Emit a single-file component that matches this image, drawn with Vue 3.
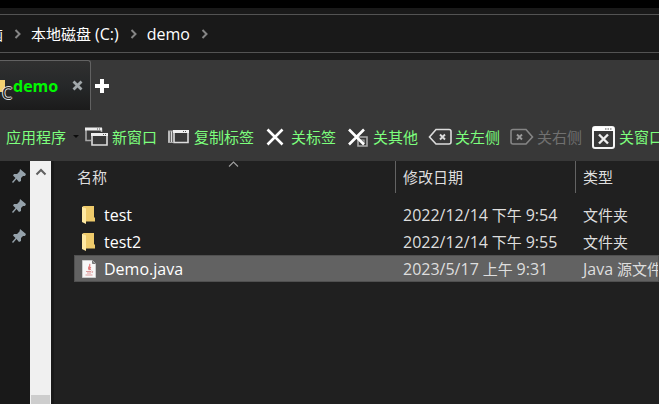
<template>
  <div class="explorer">
    <div class="titlebar"></div>
    <nav class="address">
      <div class="crumbs">
        <template v-for="crumb in crumbs" :key="crumb.text">
          <a href="#" class="crumb" @click.prevent>
            {{ crumb.text }} <span v-if="crumb.drive" class="latin">{{ crumb.drive }}</span>
          </a>
          <svg class="chevron" width="8" height="10" viewBox="0 0 8 10">
            <path d="M1.5 1l4 4-4 4" fill="none" stroke="#858585" stroke-width="2" />
          </svg>
        </template>
      </div>
    </nav>

    <div class="tabs">
      <div class="tab">
        <span class="tab-icon">
          <svg width="5" height="12" viewBox="0 0 5 12"><path d="M0 0h5v12H0z" fill="#f3d171" /></svg>
          <span class="drive">C</span>
        </span>
        <span class="tab-name">demo</span>
        <button class="tab-close" aria-label="关闭">
          <svg width="11" height="9" viewBox="0 0 11 9">
            <path d="M1.5 0.5l8 8M9.5 0.5l-8 8" stroke="#a2a8ab" stroke-width="2.8" />
          </svg>
        </button>
      </div>
      <button class="tab-add" aria-label="新标签">
        <svg width="14" height="14" viewBox="0 0 14 14">
          <path d="M7 0v14M0 7h14" stroke="#fff" stroke-width="4" />
        </svg>
      </button>
    </div>

    <div class="toolbar">
      <button class="apps">
        应用程序
        <svg width="6" height="3" viewBox="0 0 6 3"><path d="M0 0h6L3 3z" fill="#0c0c0c" /></svg>
      </button>
      <button v-for="tool in tools" :key="tool.text" class="tool" :disabled="tool.disabled">
        <svg width="24" height="24" viewBox="0 0 24 24" fill="none" stroke="#dcdcdc" stroke-width="1.6">
          <template v-if="tool.icon === 'window'">
            <path d="M5 15.500H0V4h15.500v3" stroke="#a9a9a9" />
            <path d="M-1 4h17" stroke="#eee" stroke-width="3" />
            <path d="M6 9h15v11H6z" fill="#383838" />
            <path d="M5 9.500h17" stroke="#eee" stroke-width="3" />
            <path d="M11 4h1m1 0h1M17 9.500h1m1 0h1" stroke="#555" stroke-width="1" />
          </template>
          <template v-else-if="tool.icon === 'copy'">
            <path d="M6 6.500h14v11H6zM3.500 6v12M1 6v12" />
            <path d="M5 6.500h16" stroke="#eee" stroke-width="3" />
            <path d="M0 6h5M0 17.500h5" stroke="#aaa" stroke-width="1" />
            <path d="M15 6.500h1m1 0h1" stroke="#555" stroke-width="1" />
          </template>
          <path v-else-if="tool.icon === 'close'" d="M2.500 4.500l15 15M17.500 4.500l-15 15" stroke="#fff" stroke-width="2.6" />
          <template v-else-if="tool.icon === 'others'">
            <path d="M11 12h9v9h-9z" stroke="#aaa" />
            <path d="M14 15h3v3" stroke="#aaa" stroke-width="1.2" />
            <path d="M2 4.500l15 15M17 4.500l-15 15" stroke="#fff" stroke-width="2.6" />
          </template>
          <template v-else-if="tool.icon === 'left'">
            <path d="M7 4.500h13q2 0 2 2v10.500q0 2-2 2H7l-6.500-7z" />
            <path d="M11 9.500l5 5M16 9.500l-5 5" stroke-width="1.9" />
          </template>
          <template v-else-if="tool.icon === 'right'">
            <path d="M15 4.500H2q-2 0-2 2v10.500q0 2 2 2h13l6.500-7z" stroke="#858585" />
            <path d="M6 9.500l5 5M11 9.500l-5 5" stroke="#999" stroke-width="1.9" />
          </template>
          <template v-else>
            <rect x="0" y="2" width="21" height="21" rx="2" stroke="#f4f4f4" stroke-width="2" />
            <path d="M0 4h21" stroke="#fff" stroke-width="4" />
            <path d="M12 4h1.500m1 0h1.500m1 0h1.500" stroke="#555" stroke-width="1.2" />
            <path d="M6 9.500l9 9M15 9.500l-9 9" stroke="#eee" stroke-width="2.400" />
          </template>
        </svg>
        {{ tool.text }}
      </button>
    </div>

    <div class="body">
      <aside class="sidebar">
        <svg v-for="pin in 3" :key="pin" width="14" height="14" viewBox="0 0 14 14">
          <path d="M8 0l6 5-1 2-2 0-2 2 0 3-2 1-2.500-3L1 14 0 13l3.500-4L1 6.500 2 5h3l2.500-2.500z" fill="#95a2ab" />
        </svg>
      </aside>
      <div class="scrollbar">
        <button class="scroll-up" aria-label="向上滚动">
          <svg width="12" height="8" viewBox="0 0 12 8">
            <path d="M1.500 6.500L6 2l4.500 4.500" fill="none" stroke="#606060" stroke-width="2" />
          </svg>
        </button>
        <div class="thumb"></div>
      </div>

      <main class="files">
        <table>
          <colgroup>
            <col class="col-name" />
            <col class="col-date" />
            <col />
          </colgroup>
          <thead>
            <tr>
              <th scope="col">
                名称
                <svg class="sort" width="11" height="6" viewBox="0 0 11 6">
                  <path d="M1 5.500L5.500 1 10 5.500" fill="none" stroke="#a0a0a0" stroke-width="1.100" />
                </svg>
              </th>
              <th scope="col">修改日期</th>
              <th scope="col">类型</th>
            </tr>
          </thead>
          <tbody>
            <tr
              v-for="file in files"
              :key="file.name"
              :class="{ selected: file.name === selected }"
              @click="selected = file.name"
            >
              <td>
                <div class="name latin">
                  <svg v-if="file.folder" width="14" height="18" viewBox="0 0 14 18">
                    <path d="M1 0h11v11l1 1v3.500H4z" fill="#efcb6b" />
                    <path d="M0 0.500l4 2V18l-4-2z" fill="#ffe9a2" />
                  </svg>
                  <svg v-else width="14" height="18" viewBox="0 0 14 18">
                    <path d="M.5.5h10l3 3v14H.5z" fill="#f7f7f7" stroke="#ccc" />
                    <path d="M10.500.5v3h3" fill="#888" stroke="#777" />
                    <path d="M7.500 4c2 2-3 3 0 6M9 7c-2 1-1 2-.5 3" fill="none" stroke="#df7777" stroke-width="1.200" />
                    <path d="M4 11.500h5M5 13h4M3.500 15h7M9.500 11q2 0 .5 2" fill="none" stroke="#dd9999" />
                  </svg>
                  <span>{{ file.name }}</span>
                </div>
              </td>
              <td>
                <span class="latin">{{ file.day }}</span> {{ file.period }} <span class="latin">{{ file.time }}</span>
              </td>
              <td><span v-if="file.lang" class="latin">{{ file.lang }}</span> {{ file.type }}</td>
            </tr>
          </tbody>
        </table>
      </main>
    </div>
  </div>
</template>

<script setup>
import { ref } from 'vue'

const selected = ref('Demo.java')

const crumbs = [
  { text: '脑' },
  { text: '本地磁盘', drive: '(C:)' },
  { text: 'demo' }
]

const tools = [
  { icon: 'window', text: '新窗口' },
  { icon: 'copy', text: '复制标签' },
  { icon: 'close', text: '关标签' },
  { icon: 'others', text: '关其他' },
  { icon: 'left', text: '关左侧' },
  { icon: 'right', text: '关右侧', disabled: true },
  { icon: 'closeWindow', text: '关窗口' }
]

const files = [
  { name: 'test', folder: true, day: '2022/12/14', period: '下午', time: '9:54', type: '文件夹' },
  { name: 'test2', folder: true, day: '2022/12/14', period: '下午', time: '9:55', type: '文件夹' },
  { name: 'Demo.java', day: '2023/5/17', period: '上午', time: '9:31', lang: 'Java', type: '源文件' }
]
</script>

<style>
body {
  margin: 0;
  background: #202020;
}
</style>

<style scoped>
.explorer {
  display: flex;
  flex-direction: column;
  height: 100vh;
  overflow: hidden;
  background: #202020;
  color: #fff;
  font-family: 'Open Sans', 'Noto Sans CJK SC', sans-serif;
  font-size: 15px;
  line-height: 20px;
  white-space: nowrap;
}
button {
  display: flex;
  align-items: center;
  flex-shrink: 0;
  padding: 0;
  border: 0;
  background: none;
  color: inherit;
  font: inherit;
  white-space: nowrap;
}
svg {
  display: block;
  flex-shrink: 0;
  overflow: visible;
}
.latin {
  font-size: 16px;
}
.titlebar {
  height: 8px;
  flex-shrink: 0;
  background: #000;
}
.address {
  padding: 6px 0 7px;
  background: #191919;
}
.crumbs {
  display: flex;
  align-items: center;
  height: 37px;
  margin-left: -12px;
  border: solid #535353;
  border-width: 1px 0;
}
.crumb {
  color: #fff;
  text-decoration: none;
}
.crumb:nth-of-type(3) {
  font-size: 16px;
}
.chevron {
  margin: 0 9px 0 11px;
}
.tabs {
  display: flex;
  flex-shrink: 0;
  align-items: center;
  gap: 4px;
  height: 52px;
  background: #383838;
}
.tab {
  display: flex;
  align-items: center;
  align-self: flex-start;
  box-sizing: border-box;
  width: 91px;
  height: 50px;
  border-top: 1px solid #626262;
  border-right: 1px solid #626262;
  border-radius: 0 3px 0 0;
  background: linear-gradient(#303030, #262829 50%, #1b1b1b);
}
.tab-icon {
  position: relative;
  width: 13px;
}
.drive {
  position: absolute;
  top: 3px;
  left: 2px;
  color: #222;
  font-size: 16px;
  text-shadow: 1px 0 #ddd, -1px 0 #ddd, 0 1px #ddd, 0 -1px #ddd;
}
.tab-name {
  flex: 1;
  color: #00f800;
  font-size: 16px;
  font-weight: bold;
}
.tab-close {
  margin-right: 7px;
}
.toolbar {
  display: flex;
  flex-shrink: 0;
  align-items: center;
  gap: 11px;
  height: 49px;
  padding-left: 6px;
  background: #383838;
  color: #7dff7d;
}
.apps {
  gap: 7px;
  margin-right: -4px;
}
.tool {
  gap: 2px;
}
.tool:disabled {
  color: #707070;
}
.body {
  display: flex;
  flex: 1;
  min-height: 0;
}
.sidebar {
  display: flex;
  flex-direction: column;
  align-items: flex-end;
  gap: 16px;
  box-sizing: border-box;
  width: 30px;
  padding: 8px 4px;
  flex-shrink: 0;
  background: #191919;
}
.scrollbar {
  display: flex;
  flex-direction: column;
  justify-content: space-between;
  width: 21px;
  flex-shrink: 0;
  background: #f0f0f0;
}
.scroll-up {
  justify-content: center;
  height: 21px;
}
.thumb {
  height: 9px;
  margin: 0 1px;
  background: #cdcdcd;
}
.files {
  flex: 1;
  min-width: 0;
  padding-left: 20px;
  border-left: 3px solid #191919;
}
table {
  width: 100%;
  table-layout: fixed;
  border-collapse: separate;
  border-spacing: 0;
}
.col-name {
  width: 322px;
}
.col-date {
  width: 180px;
}
th,
td {
  padding: 0 0 0 7px;
  text-align: left;
  font-weight: normal;
}
th {
  position: relative;
  height: 32px;
  color: #dedede;
}
th:first-child {
  padding-left: 3px;
}
th:not(:last-child) {
  border-right: 1px solid #636363;
}
.sort {
  position: absolute;
  top: 0;
  left: 48%;
}
tbody::before {
  content: '';
  display: block;
  height: 8px;
}
td {
  height: 27px;
  color: #dedede;
}
td:first-child {
  padding-left: 8px;
}
.name {
  display: flex;
  align-items: center;
  gap: 8px;
  color: #fff;
}
.selected {
  outline: 1px solid #505050;
  outline-offset: -1px;
  background: #626262;
}
</style>
